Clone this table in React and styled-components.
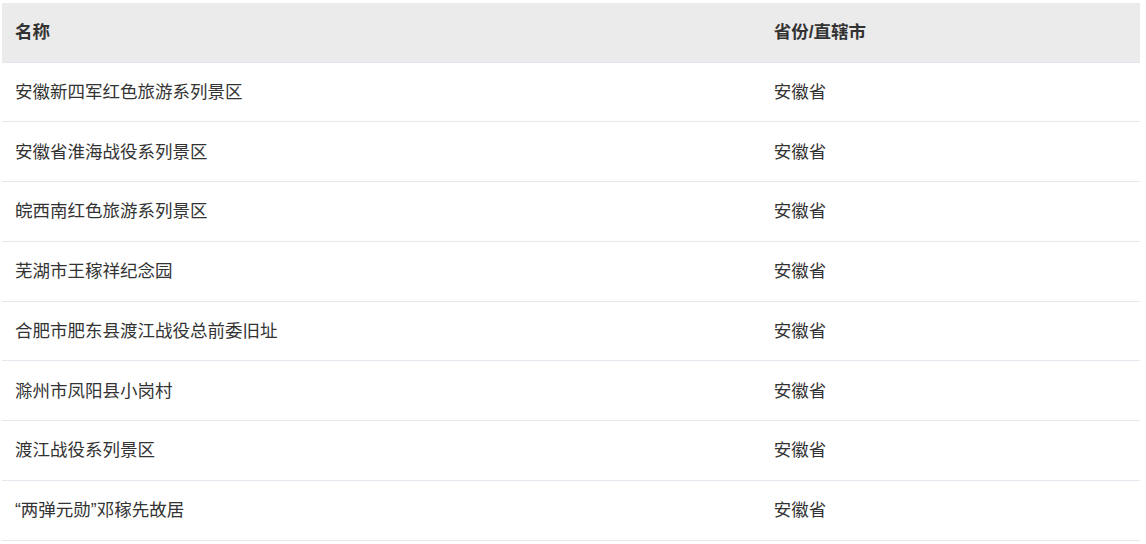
import React from "react";
import styled, { createGlobalStyle } from "styled-components";

const rows = [
  "安徽新四军红色旅游系列景区",
  "安徽省淮海战役系列景区",
  "皖西南红色旅游系列景区",
  "芜湖市王稼祥纪念园",
  "合肥市肥东县渡江战役总前委旧址",
  "滁州市凤阳县小岗村",
  "渡江战役系列景区",
  "“两弹元勋”邓稼先故居",
];

const GlobalStyle = createGlobalStyle`
  body {
    margin: 0;
    background: #fff;
    font-family: "Liberation Sans", "Noto Sans CJK SC", sans-serif;
    color: #333;
  }
`;

const Wrap = styled.div`
  padding: 3px 6px 0 2px;
`;

const Table = styled.table`
  width: 100%;
  border-collapse: collapse;
  table-layout: fixed;
  font-size: 17.5px;
`;

const HeadCell = styled.th`
  box-sizing: border-box;
  height: 59px;
  padding: 0 13px 3px;
  text-align: left;
  font-weight: bold;
  background: #ebebeb;
  border-bottom: 1px solid #e1e7ee;
  width: ${(p) => p.$w || "auto"};
`;

const Cell = styled.td`
  box-sizing: border-box;
  height: 59.75px;
  padding: 0 13px 3px;
  text-align: left;
  border-bottom: 1px solid #e4e9ef;
  white-space: nowrap;
`;

export default function App() {
  return (
    <Wrap>
      <GlobalStyle />
      <Table>
        <thead>
          <tr>
            <HeadCell $w="66.667%">名称</HeadCell>
            <HeadCell>省份/直辖市</HeadCell>
          </tr>
        </thead>
        <tbody>
          {rows.map((name) => (
            <tr key={name}>
              <Cell>{name}</Cell>
              <Cell>安徽省</Cell>
            </tr>
          ))}
        </tbody>
      </Table>
    </Wrap>
  );
}
